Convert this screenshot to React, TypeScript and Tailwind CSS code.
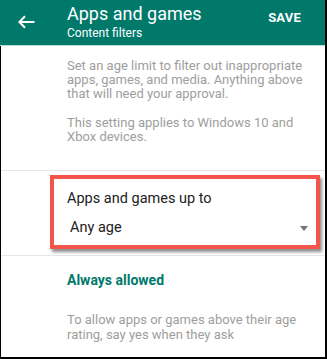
import React from "react";

export default function App() {
  return (
    <div
      className="w-[327px] h-[359px] bg-white border-r-2 border-b-2 border-black overflow-hidden flex flex-col"
      style={{ fontFamily: "Roboto, 'Noto Sans', sans-serif" }}
    >
      <div className="h-[46px] shrink-0 bg-[#00796b] border-b border-[#b2dfdb] flex text-white">
        <div className="w-[67px] shrink-0 pl-[18px] pt-[15px]">
          <svg width="17" height="14" viewBox="0 0 17 14" fill="none">
            <path d="M1 7 H16.5" stroke="white" strokeWidth="2" />
            <path d="M7 1.2 L1.3 7 L7 12.8" stroke="white" strokeWidth="2" fill="none" />
          </svg>
        </div>
        <div className="flex-1 pt-[3px]">
          <div className="text-[18px] leading-[22px]">Apps and games</div>
          <div className="text-[12px] leading-[15px] mt-[1px]">Content filters</div>
        </div>
        <div className="pr-[24px] pt-[10px] text-[13px] leading-[16px] font-bold tracking-[0.2px]">SAVE</div>
      </div>
      <div className="flex-1 border-l border-black flex flex-col">
        <div className="pl-[66px] pr-[20px] pt-[13px] pb-[26px] text-[13px] leading-[14px] text-[#9e9e9e] border-b border-[#e6e6e6]">
          <p>Set an age limit to filter out inappropriate apps, games, and media. Anything above that will need your approval.</p>
          <p className="mt-[15px]">This setting applies to Windows 10 and Xbox devices.</p>
        </div>
        <div className="pt-[4px] pb-[6px] pl-[49px] pr-[5px] border-b border-[#e6e6e6]">
          <div className="border-4 border-[#f2564b] shadow-[2px_3px_3px_rgba(0,0,0,0.45)] bg-white pt-[11px] pb-[9px]">
            <div className="pl-[13px] text-[14.5px] leading-[17px] text-[#212121]">Apps and games up to</div>
            <div className="mt-[12px] pl-[16px] pr-[8px] flex items-center justify-between text-[14.5px] leading-[17px] text-[#212121]">
              <span>Any age</span>
              <svg width="8" height="5" viewBox="0 0 8 5" className="mt-[1px]">
                <path d="M0 0 H8 L4 5 Z" fill="#757575" />
              </svg>
            </div>
          </div>
        </div>
        <div className="pl-[66px] pr-[20px] pt-[16px]">
          <div className="text-[14px] leading-[17px] font-bold text-[#00796b]">Always allowed</div>
          <p className="mt-[23px] text-[13px] leading-[15px] text-[#9e9e9e]">
            To allow apps or games above their age rating, say yes when they ask
          </p>
        </div>
      </div>
    </div>
  );
}
